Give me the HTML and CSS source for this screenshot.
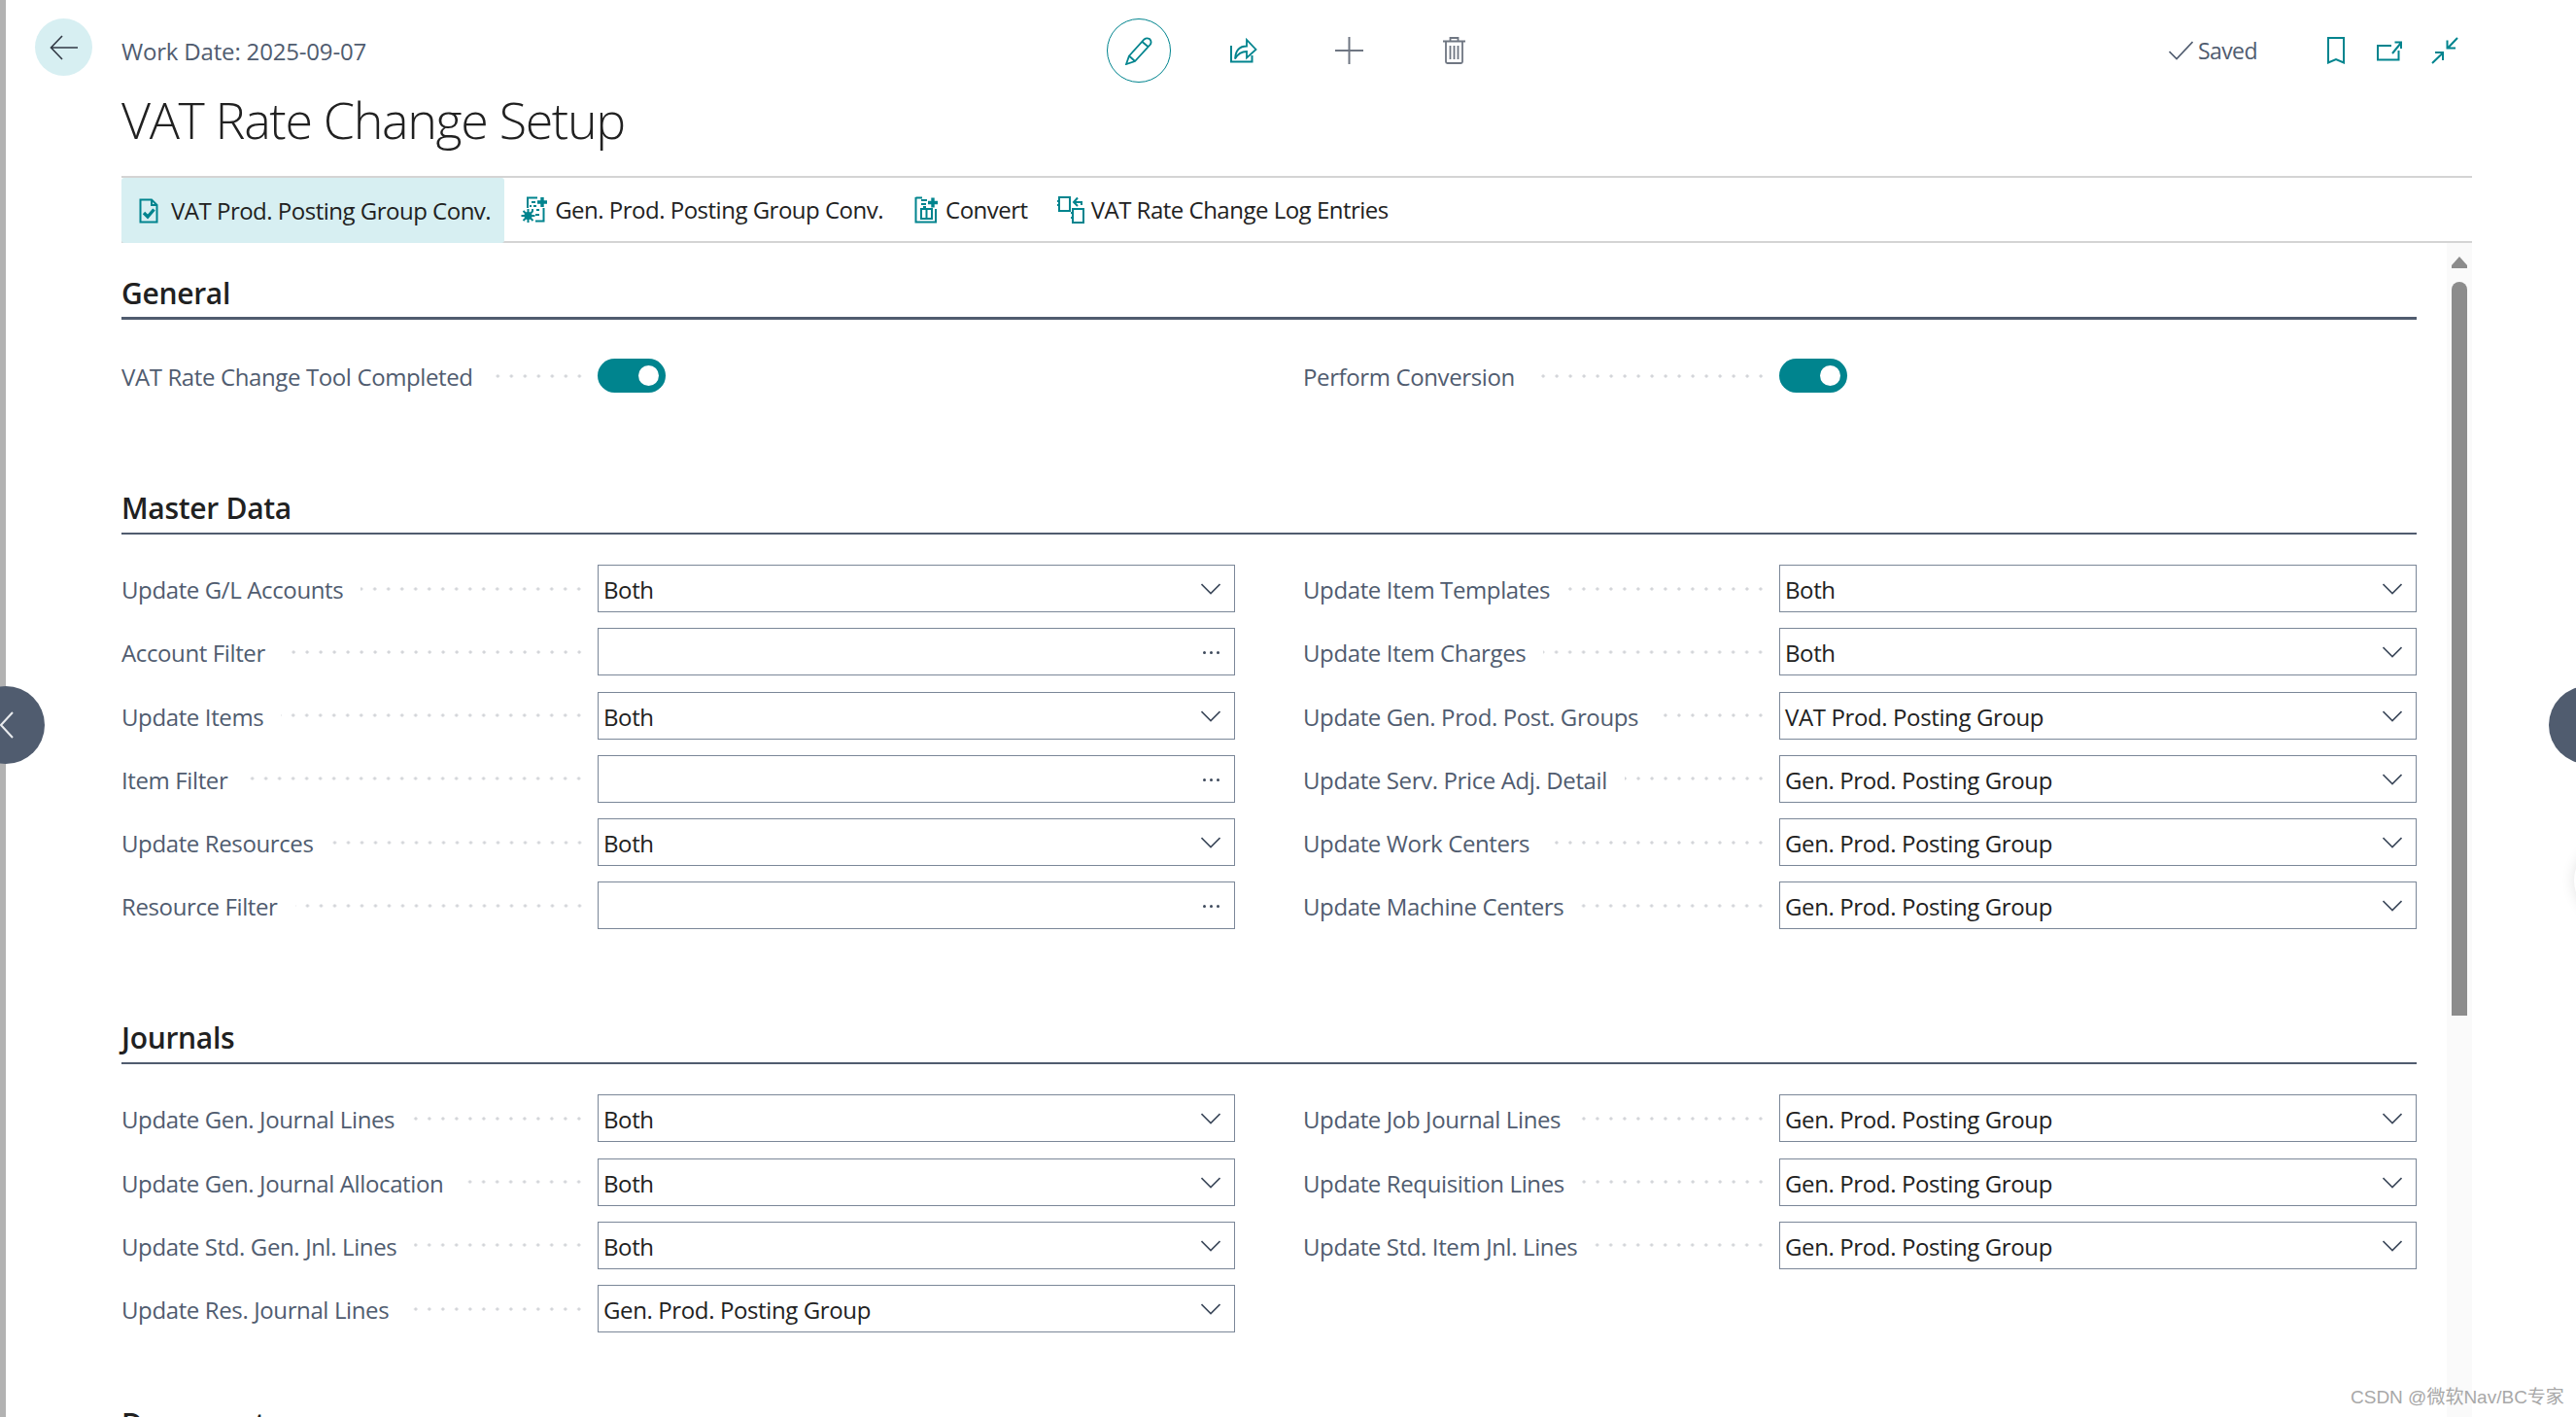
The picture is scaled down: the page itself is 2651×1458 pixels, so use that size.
FILE: index.html
```html
<!DOCTYPE html>
<html lang="en">
<head>
<meta charset="utf-8">
<title>VAT Rate Change Setup</title>
<link rel="stylesheet" href="styles.css">
</head>
<body>
<div class="app">
  <header class="header">
    <div class="back-col">
      <button class="back" aria-label="Back"><svg width="30" height="26" viewBox="0 0 30 26"><path d="M29 13H2M13 1 1.500 13 13 25" class="ln-dark"/></svg></button>
    </div>
    <div class="header-main">
      <div class="topbar">
        <div class="workdate">Work Date: 2025-09-07</div>
        <div class="actions">
          <span class="edit-circle"><svg width="28" height="29" viewBox="0 0 28 29"><path d="M4 19.500 19.500 2.500q2.500-2 5.500-.5 2.500 2.500 1 5.500L10 25 1 28ZM4 19.500l6 5.500M17.500 5l6.500 5.500" class="ln-teal"/></svg></span>
          <svg class="ic-share" width="29" height="26" viewBox="0 0 29 26"><path d="M2 8V24.500H23.500V18" class="ln-teal2"/><path d="M6 21.500C6.500 13 11 8.500 18 8.500V2l9.500 10-9.500 8.500v-6.500c-5 0-9 2-12 7.500Z" class="ln-teal"/></svg>
          <svg class="ic-plus" width="29" height="28" viewBox="0 0 29 28"><path d="M14.500 0V28M0 14H29" class="ln-gray"/></svg>
          <svg class="ic-trash" width="23" height="28" viewBox="0 0 23 28"><path d="M0 4.500H23M7.500 4V1h8v3M3 5V25.500q0 1.500 1.500 1.500h14q1.500 0 1.500-1.500V5M7.500 9V23M11.500 9V23M15.500 9V23" class="ln-gray2"/></svg>
          <div class="right-tools">
            <svg class="ic-check" width="25" height="20" viewBox="0 0 25 20"><path d="M.5 11 8 18.500 24.500 1" class="ln-slate"/></svg>
            <span class="saved">Saved</span>
            <svg class="ic-bookmark" width="18" height="28" viewBox="0 0 18 28"><path d="M1 1H17V26.500L9 23 1 26.500Z" class="ln-teal2"/></svg>
            <svg class="ic-open" width="26" height="21" viewBox="0 0 26 21"><path d="M15 5H1V19.500H22.500V10M16 13 25 2M18.500 1.500H25V8" class="ln-teal2"/></svg>
            <svg class="ic-collapse" width="28" height="28" viewBox="0 0 28 28"><path d="M1 27 12 16.500M4 16H12V24M27 1 17 11.500M16.500 3.500V11.500H25" class="ln-teal2"/></svg>
          </div>
        </div>
      </div>
      <h1 class="title">VAT Rate Change Setup</h1>
    </div>
  </header>

  <nav class="toolbar">
    <a class="tool tool-active"><svg width="20" height="26" viewBox="0 0 20 26"><path d="M1.500 1.500H13L18.500 7V24.500H1.500ZM13 1.500V7H18.500" class="ln-teal2"/><path d="M5 15l4 4 6.500-7.500" class="ln-teal3"/></svg><span>VAT Prod. Posting Group Conv.</span></a>
    <a class="tool"><svg width="28" height="27" viewBox="0 0 28 27"><path d="M7 12V1.500H17M23.500 12V25.500H15M11 6H15M9 10H11M13 10H16M11 14H13M16 14H19M15 19H19" class="ln-teal2"/><path d="M22 1V11M17 6H27" class="ln-teal3"/><circle cx="7.500" cy="20" r="4" class="ln-teal4"/><path d="M7.500 13V27M.5 20H14.500M2.500 15 12.500 25M12.500 15 2.500 25" class="ln-teal2"/></svg><span>Gen. Prod. Posting Group Conv.</span></a>
    <a class="tool"><svg width="25" height="28" viewBox="0 0 25 28"><path d="M1.500 1V26.500H22V13M1.500 1.500H8M7 4H13M7 8H12M9 11H12" class="ln-teal2"/><path d="M19 1.500V11.500M14 6.500H24" class="ln-teal3"/><path d="M7 13H18V23H7ZM12.500 13V23" class="ln-teal2"/></svg><span>Convert</span></a>
    <a class="tool tool-log"><svg width="28" height="28" viewBox="0 0 28 28"><path d="M2 1H13V15H2ZM16 13H27V27H16Z" class="ln-teal2"/><path d="M0 5H3M0 9H3M14 17H17M14 22H17" class="ln-teal2"/><path d="M25 9V6H18M21 1.500 17 6 21 10" class="ln-teal2"/></svg><span>VAT Rate Change Log Entries</span></a>
  </nav>

  <div class="body">
    <main class="content">
      <section class="section section-first">
        <h2 class="section-title">General</h2>
        <div class="fields">
          <div class="field field-toggle"><span class="label">VAT Rate Change Tool Completed</span><span class="dots"></span><span class="toggle"><span class="knob"></span></span></div>
          <div class="field field-toggle"><span class="label">Perform Conversion</span><span class="dots"></span><span class="toggle"><span class="knob"></span></span></div>
        </div>
      </section>

      <section class="section section-master">
        <h2 class="section-title">Master Data</h2>
        <div class="fields">
          <div class="field"><span class="label">Update G/L Accounts</span><span class="dots"></span><span class="input">Both<svg class="chev" width="20" height="12" viewBox="0 0 20 12"><path d="M.5 1 10 10.500 19.500 1"/></svg></span></div>
          <div class="field"><span class="label">Update Item Templates</span><span class="dots"></span><span class="input">Both<svg class="chev" width="20" height="12" viewBox="0 0 20 12"><path d="M.5 1 10 10.500 19.500 1"/></svg></span></div>
          <div class="field"><span class="label">Account Filter</span><span class="dots"></span><span class="input"><span class="more"><i></i><i></i><i></i></span></span></div>
          <div class="field"><span class="label">Update Item Charges</span><span class="dots"></span><span class="input">Both<svg class="chev" width="20" height="12" viewBox="0 0 20 12"><path d="M.5 1 10 10.500 19.500 1"/></svg></span></div>
          <div class="field"><span class="label">Update Items</span><span class="dots"></span><span class="input">Both<svg class="chev" width="20" height="12" viewBox="0 0 20 12"><path d="M.5 1 10 10.500 19.500 1"/></svg></span></div>
          <div class="field"><span class="label">Update Gen. Prod. Post. Groups</span><span class="dots"></span><span class="input">VAT Prod. Posting Group<svg class="chev" width="20" height="12" viewBox="0 0 20 12"><path d="M.5 1 10 10.500 19.500 1"/></svg></span></div>
          <div class="field"><span class="label">Item Filter</span><span class="dots"></span><span class="input"><span class="more"><i></i><i></i><i></i></span></span></div>
          <div class="field"><span class="label">Update Serv. Price Adj. Detail</span><span class="dots"></span><span class="input">Gen. Prod. Posting Group<svg class="chev" width="20" height="12" viewBox="0 0 20 12"><path d="M.5 1 10 10.500 19.500 1"/></svg></span></div>
          <div class="field"><span class="label">Update Resources</span><span class="dots"></span><span class="input">Both<svg class="chev" width="20" height="12" viewBox="0 0 20 12"><path d="M.5 1 10 10.500 19.500 1"/></svg></span></div>
          <div class="field"><span class="label">Update Work Centers</span><span class="dots"></span><span class="input">Gen. Prod. Posting Group<svg class="chev" width="20" height="12" viewBox="0 0 20 12"><path d="M.5 1 10 10.500 19.500 1"/></svg></span></div>
          <div class="field"><span class="label">Resource Filter</span><span class="dots"></span><span class="input"><span class="more"><i></i><i></i><i></i></span></span></div>
          <div class="field"><span class="label">Update Machine Centers</span><span class="dots"></span><span class="input">Gen. Prod. Posting Group<svg class="chev" width="20" height="12" viewBox="0 0 20 12"><path d="M.5 1 10 10.500 19.500 1"/></svg></span></div>
        </div>
      </section>

      <section class="section section-journals">
        <h2 class="section-title">Journals</h2>
        <div class="fields">
          <div class="field"><span class="label">Update Gen. Journal Lines</span><span class="dots"></span><span class="input">Both<svg class="chev" width="20" height="12" viewBox="0 0 20 12"><path d="M.5 1 10 10.500 19.500 1"/></svg></span></div>
          <div class="field"><span class="label">Update Job Journal Lines</span><span class="dots"></span><span class="input">Gen. Prod. Posting Group<svg class="chev" width="20" height="12" viewBox="0 0 20 12"><path d="M.5 1 10 10.500 19.500 1"/></svg></span></div>
          <div class="field"><span class="label">Update Gen. Journal Allocation</span><span class="dots"></span><span class="input">Both<svg class="chev" width="20" height="12" viewBox="0 0 20 12"><path d="M.5 1 10 10.500 19.500 1"/></svg></span></div>
          <div class="field"><span class="label">Update Requisition Lines</span><span class="dots"></span><span class="input">Gen. Prod. Posting Group<svg class="chev" width="20" height="12" viewBox="0 0 20 12"><path d="M.5 1 10 10.500 19.500 1"/></svg></span></div>
          <div class="field"><span class="label">Update Std. Gen. Jnl. Lines</span><span class="dots"></span><span class="input">Both<svg class="chev" width="20" height="12" viewBox="0 0 20 12"><path d="M.5 1 10 10.500 19.500 1"/></svg></span></div>
          <div class="field"><span class="label">Update Std. Item Jnl. Lines</span><span class="dots"></span><span class="input">Gen. Prod. Posting Group<svg class="chev" width="20" height="12" viewBox="0 0 20 12"><path d="M.5 1 10 10.500 19.500 1"/></svg></span></div>
          <div class="field"><span class="label">Update Res. Journal Lines</span><span class="dots"></span><span class="input">Gen. Prod. Posting Group<svg class="chev" width="20" height="12" viewBox="0 0 20 12"><path d="M.5 1 10 10.500 19.500 1"/></svg></span></div>
        </div>
      </section>

      <section class="section section-documents">
        <h2 class="section-title">Documents</h2>
      </section>
    </main>
    <aside class="scrollbar">
      <span class="scroll-up"></span>
      <span class="scroll-thumb"></span>
    </aside>
  </div>

  <div class="nav-circle nav-left"><svg width="14" height="28" viewBox="0 0 14 28"><path d="M13 1 1 14 13 27" class="ln-white"/></svg></div>
  <div class="nav-circle nav-right"></div>
  <div class="nav-ghost"></div>
  <div class="watermark">CSDN @微软Nav/BC专家</div>
</div>
</body>
</html>
```
FILE: styles.css
```css
* { box-sizing: border-box; }
html, body { margin: 0; padding: 0; background: #fff; }
body { font-family: "Open Sans", "Noto Sans", sans-serif; }

.app {
  position: relative;
  display: flex;
  flex-direction: column;
  height: 1458px;
  overflow: hidden;
  padding-left: 6px;
  background: linear-gradient(#b2b2b2, #b2b2b2) left top / 6px 100% no-repeat;
}

svg { display: block; flex: none; fill: none; }
.ln-dark { stroke: #323a45; stroke-width: 1.6; }
.ln-teal { stroke: #00848e; stroke-width: 1.8; }
.ln-teal2 { stroke: #00848e; stroke-width: 2; }
.ln-teal3 { stroke: #00848e; stroke-width: 3.4; }
.ln-teal4 { fill: #00848e; }
.ln-gray { stroke: #6f7682; stroke-width: 2; }
.ln-gray2 { stroke: #6f7682; stroke-width: 1.8; }
.ln-slate { stroke: #505c6f; stroke-width: 1.6; }
.ln-white { stroke: #e9ebee; stroke-width: 2; }

.header { display: grid; grid-template-columns: 119px 1fr; height: 181px; }
.back-col { padding: 19px 0 0 30px; }
.back {
  display: flex; align-items: center; justify-content: center;
  width: 59px; height: 59px; padding: 0; border: 0;
  border-radius: 50%; background: #d7eff2;
}
.topbar { display: flex; align-items: center; height: 66px; margin-top: 19px; }
.workdate { width: 1014px; flex: none; font-size: 24px; letter-spacing: -.18px; color: #505c6f; }
.actions { display: flex; align-items: center; flex: 1; padding-right: 121px; }
.edit-circle {
  display: flex; align-items: center; justify-content: center;
  width: 66px; height: 66px; border: 1px solid #00848e; border-radius: 50%;
}
.ic-share { margin-left: 60px; }
.ic-plus { margin-left: 80px; }
.ic-trash { margin-left: 82px; }
.right-tools { display: flex; align-items: center; margin-left: auto; }
.saved { margin-left: 5px; font-size: 23px; letter-spacing: -.55px; color: #505c6f; }
.ic-bookmark { margin-left: 72px; }
.ic-open { margin-left: 33px; }
.ic-collapse { margin-left: 30px; }

.title {
  margin: 3px 0 0;
  font-size: 52px;
  line-height: 70px;
  font-weight: 300;
  letter-spacing: -1.35px;
  color: #212121;
}

.toolbar {
  display: flex;
  height: 69px;
  margin: 0 107px 0 119px;
  border-top: 2px solid #d4d4d4;
  border-bottom: 2px solid #d4d4d4;
}
.tool {
  display: flex; align-items: center; gap: 7px;
  padding: 0 15px 0 17px;
  font-size: 24px; letter-spacing: -.5px; color: #212121;
  white-space: nowrap;
}
.tool-active {
  gap: 13px; padding: 0 14px 0 18px; margin-bottom: -2px;
  background: #d7eff2; border-radius: 3px;
}
.tool-log { margin-left: -2px; }

.body { display: flex; flex: 1; min-height: 0; padding-left: 119px; padding-right: 107px; }
.content { width: 2362px; flex: none; }

.section-title {
  margin: 0;
  height: 47px;
  padding-bottom: 5px;
  border-bottom: 2px solid #505c6f;
  font-size: 30px; line-height: 40px; font-weight: 600;
  letter-spacing: -.3px;
  color: #212121;
}
.section-first { padding-top: 32px; }
.section-first .section-title { border-bottom-width: 3px; }
.section-master { margin-top: 86px; }
.section-journals { margin-top: 92px; }
.section-documents { margin-top: 74px; }

.fields {
  display: grid;
  grid-template-columns: 1146px 1146px;
  column-gap: 70px;
  row-gap: 16.25px;
  margin-top: 31px;
}
.field { display: flex; align-items: center; height: 49px; }
.field-toggle { height: 53px; margin-bottom: 4px; }
.label { flex: none; padding-top: 2px; font-size: 24px; letter-spacing: -.38px; color: #505c6f; white-space: nowrap; }
.dots {
  flex: 1;
  height: 4px;
  margin: 0 12px 0 18px;
  background-image: radial-gradient(circle at center, #d2d4d8 1.4px, transparent 1.8px);
  background-size: 14px 4px;
  background-position: right center;
  background-repeat: repeat-x;
}
.input {
  position: relative;
  display: flex; align-items: center;
  width: 656px; height: 49px; flex: none;
  padding: 2px 0 0 5px;
  border: 1px solid #7b8798;
  font-size: 24px; letter-spacing: -.38px; color: #212121;
}
.chev { position: absolute; right: 14px; top: 18px; stroke: #3e4a5c; stroke-width: 1.6; }
.more { position: absolute; right: 15px; top: 23px; display: flex; gap: 4px; }
.more i { display: block; width: 3px; height: 3px; border-radius: 50%; background: #3e4a5c; }

.toggle {
  position: relative;
  width: 70px; height: 35px; flex: none;
  align-self: flex-start; margin-top: 9px; margin-right: 586px;
  border-radius: 18px;
  background: #00848e;
}
.knob {
  position: absolute; right: 7px; top: 7px;
  width: 21px; height: 21px; border-radius: 50%; background: #fff;
}

.scrollbar {
  position: relative;
  width: 26px; flex: none; margin-left: 31px;
  display: flex; flex-direction: column; align-items: center;
  background: #fafafa;
}
.scroll-up {
  display: block; width: 16px; height: 12px; margin-top: 14px;
  background: #8c8c8c;
  clip-path: polygon(50% 0, 100% 75%, 100% 100%, 0 100%, 0 75%);
}
.scroll-thumb {
  display: block; width: 16px; height: 755px; margin-top: 14px;
  background: #8c8c8c; border-radius: 8px 8px 0 0;
}

.nav-circle {
  position: absolute;
  width: 80px; height: 80px; border-radius: 50%;
  background: #505c6f;
  display: flex; align-items: center;
}
.nav-left { left: -34px; top: 706px; padding-left: 34px; }
.nav-right { left: 2623px; top: 706px; }
.nav-ghost {
  position: absolute; left: 2649px; top: 866px;
  width: 80px; height: 80px; border-radius: 50%;
  background: #fff; box-shadow: 0 0 14px rgba(0,0,0,.12);
}
.watermark {
  position: absolute; left: 2419px; top: 1425px;
  font-family: "Liberation Sans", "Noto Sans CJK SC", sans-serif;
  font-size: 19px; line-height: 26px; color: #a8a8a8;
  white-space: nowrap;
}
```
